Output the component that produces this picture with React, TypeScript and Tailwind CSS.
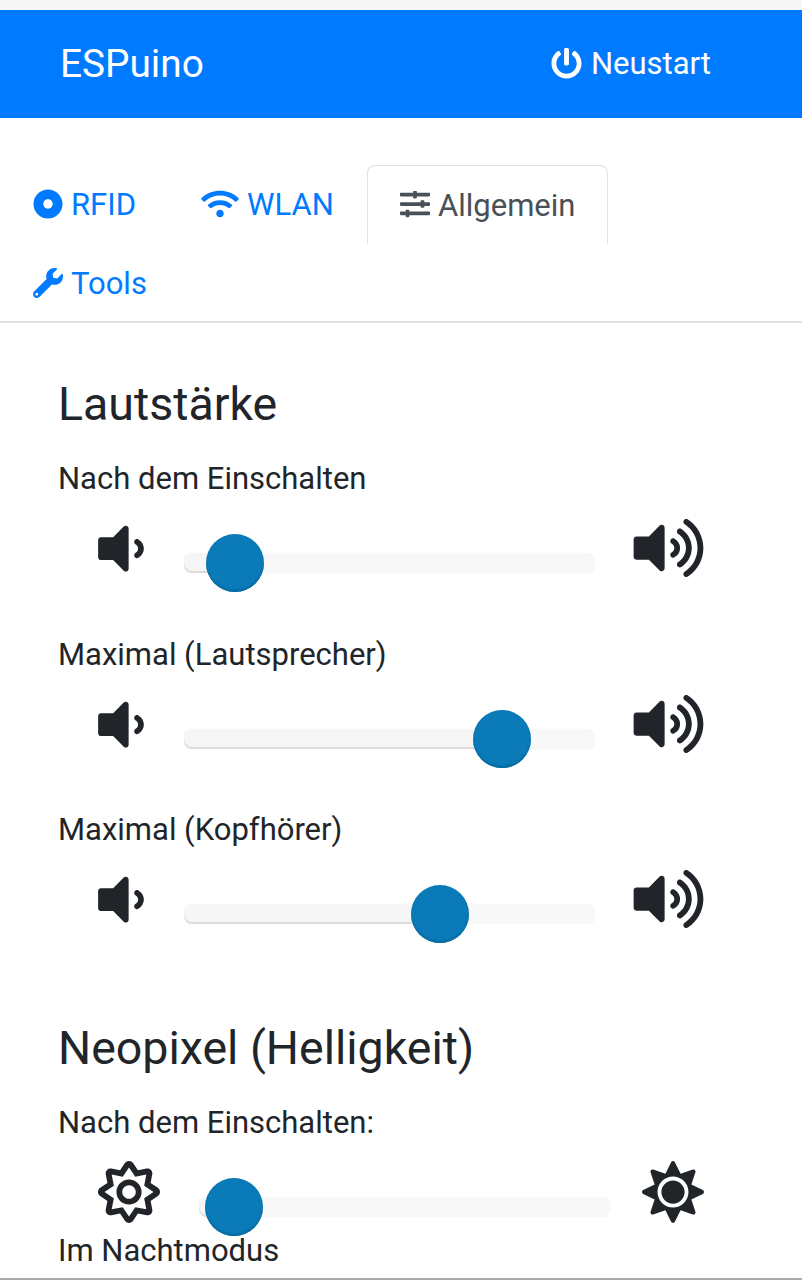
import React from "react";
import { FaPowerOff, FaDotCircle, FaWifi, FaSlidersH, FaWrench, FaVolumeDown, FaVolumeUp, FaRegSun, FaSun } from "react-icons/fa";

function Track({ thumb }: { thumb: number }) {
  return (
    <div className="relative h-[20px] w-[411px] overflow-visible rounded-[8px] bg-[#f8f8f8] shadow-[0_0_1px_#e8e8e8]">
      <div
        className="absolute bottom-0 left-0 h-[20px] rounded-[8px] bg-[#f6f6f6] shadow-[inset_0_-2px_1px_#dcdcdc]"
        style={{ width: thumb + 20 }}
      />
      <div
        className="absolute top-[-19px] h-[58px] w-[58px] rounded-full bg-[#0a7ab8] shadow-[inset_0_-2px_2px_#076a9f]"
        style={{ left: thumb }}
      />
    </div>
  );
}

function VolumeRow({ label, thumb }: { label: string; thumb: number }) {
  return (
    <div className="h-[175.5px]">
      <div className="h-[42px] pt-[3px] text-[31px] leading-[45px] text-[#212529]">{label}</div>
      <div className="flex h-[100px] items-start">
        <div className="w-[126px] pl-[39px] pt-[23px] text-[#212529]">
          <FaVolumeDown className="h-[61px] w-[48px]" />
        </div>
        <div className="pt-[58px]">
          <Track thumb={thumb} />
        </div>
        <div className="ml-[38px] pt-[22px] text-[#212529]">
          <FaVolumeUp className="h-[62px] w-[71px]" />
        </div>
      </div>
    </div>
  );
}

export default function App() {
  return (
    <div className="h-[1280px] w-[802px] overflow-hidden bg-white font-['Roboto',sans-serif]">
      <div className="h-[10px] bg-[#f6f6f6]" />
      <div className="flex h-[108px] items-center justify-between bg-[#007bff] pl-[60px] pr-[91px] text-white">
        <div className="text-[38.75px] leading-[46px]">ESPuino</div>
        <div className="flex items-center gap-[9px] text-[31px] leading-[46px]">
          <FaPowerOff className="mb-[2px] h-[31px] w-[31px]" />
          <span>Neustart</span>
        </div>
      </div>
      <div className="h-[205px] border-b-2 border-[#dee2e6] pt-[47px] text-[31px] text-[#007bff]">
        <div className="flex h-[79px] items-center">
          <div className="flex w-[168px] items-center gap-[8px] pl-[33px]">
            <FaDotCircle className="mb-[2px] h-[30px] w-[30px]" />
            <span className="pt-[2px]">RFID</span>
          </div>
          <div className="flex w-[199px] items-center gap-[8px] pl-[33px]">
            <FaWifi className="mb-[2px] h-[30px] w-[38px]" />
            <span className="pt-[2px]">WLAN</span>
          </div>
          <div className="flex h-[79px] w-[241px] items-center gap-[8px] rounded-t-[8px] border border-b-0 border-[#dee2e6] pl-[32px] text-[#495057]">
            <FaSlidersH className="mb-[2px] h-[30px] w-[30px]" />
            <span className="pt-[2px]">Allgemein</span>
          </div>
        </div>
        <div className="flex h-[79px] items-center gap-[8px] pl-[33px]">
          <FaWrench className="mb-[2px] h-[30px] w-[30px]" />
          <span className="pt-[2px]">Tools</span>
        </div>
      </div>
      <div className="pl-[58px] pt-[50px]">
        <h2 className="h-[80px] text-[46.5px] leading-[62px] text-[#212529]">Lautstärke</h2>
        <VolumeRow label="Nach dem Einschalten" thumb={22} />
        <VolumeRow label="Maximal (Lautsprecher)" thumb={289} />
        <VolumeRow label="Maximal (Kopfhörer)" thumb={227} />
        <h2 className="mt-[37px] h-[80px] text-[46.5px] leading-[62px] text-[#212529]">Neopixel (Helligkeit)</h2>
        <div className="h-[42px] pt-[3px] text-[31px] leading-[45px] text-[#212529]">Nach dem Einschalten:</div>
        <div className="flex h-[92px] items-start">
          <div className="w-[141px] pl-[40px] pt-[22px] text-[#212529]">
            <FaRegSun className="h-[62px] w-[62px]" />
          </div>
          <div className="pt-[58px]">
            <Track thumb={6} />
          </div>
          <div className="ml-[32px] pt-[22px] text-[#212529]">
            <FaSun className="h-[62px] w-[62px]" />
          </div>
        </div>
        <div className="text-[31px] leading-[40px] text-[#212529]">Im Nachtmodus</div>
      </div>
      <div className="fixed bottom-0 left-0 h-[2px] w-[802px] bg-[#aaaaaa]" />
    </div>
  );
}
